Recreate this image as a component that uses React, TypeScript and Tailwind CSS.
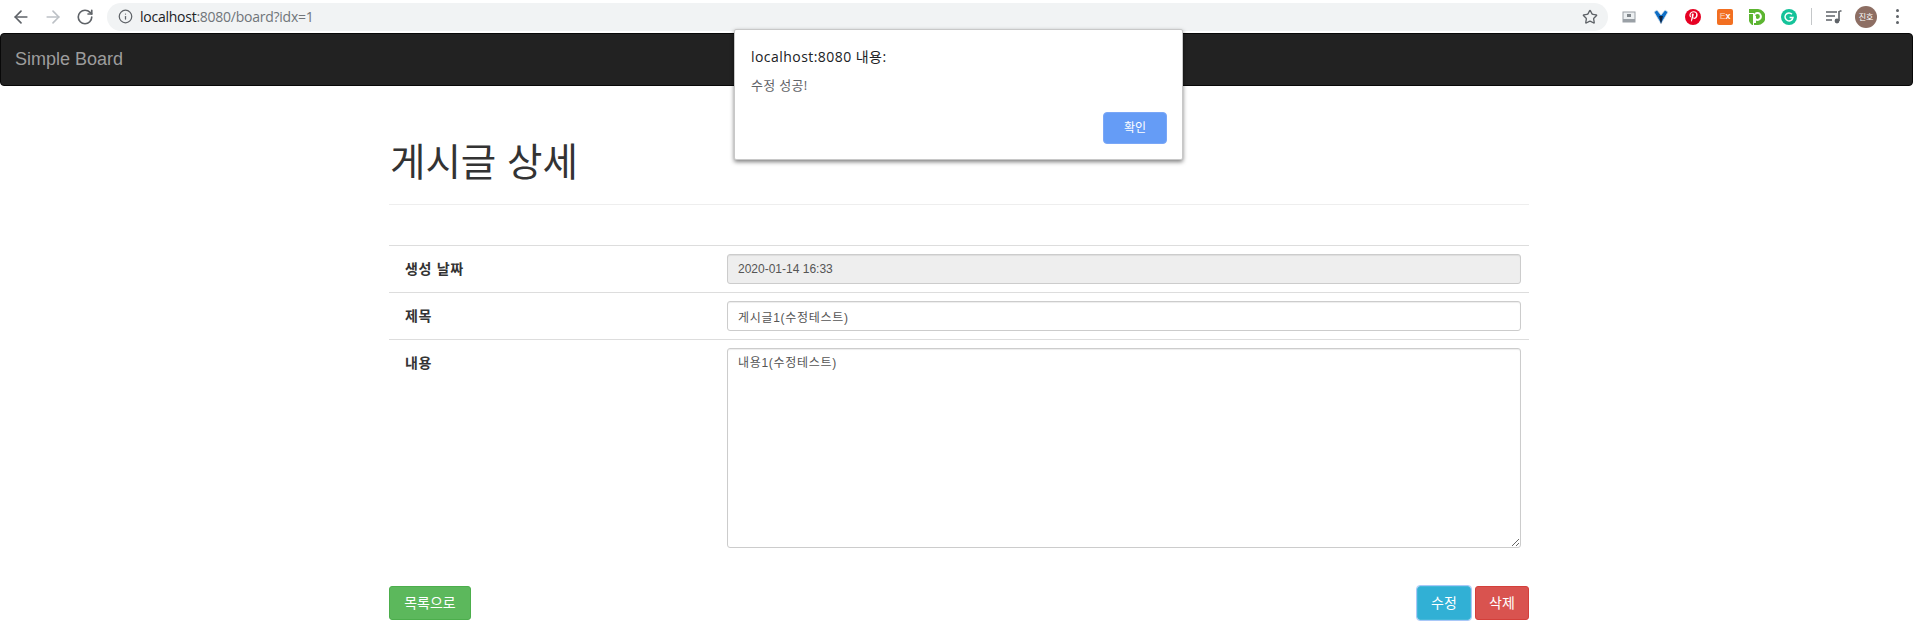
import { ArrowLeft, ArrowRight, RotateCw, Info, Star } from 'lucide-react';
import { FaPinterestP } from 'react-icons/fa';

const SANS = 'font-["Liberation_Sans","Noto_Sans_CJK_KR",sans-serif]';

function BrowserBar() {
  return (
    <div className="flex h-[33px] items-center bg-white pl-[11px] pr-[14px]">
      <ArrowLeft size={20} strokeWidth={2} className="text-[#5f6368]" />
      <ArrowRight size={20} strokeWidth={2} className="ml-[12px] text-[#bdc1c6]" />
      <RotateCw size={18} strokeWidth={2.2} className="ml-[13px] text-[#5f6368]" />
      <div className="ml-[13px] flex h-[28px] flex-1 items-center rounded-full bg-[#f1f3f4] pl-[11px] pr-[10px]">
        <Info size={15} strokeWidth={2} className="text-[#5f6368]" />
        <span className='ml-[7px] text-[14px] text-[#70757a] font-["Open_Sans","Noto_Sans",sans-serif] tracking-[-0.25px]'>
          <span className="text-[#202124]">localhost</span>:8080/board?idx=1
        </span>
        <Star size={16} strokeWidth={2} className="ml-auto text-[#5f6368]" />
      </div>
      <div className="ml-[14px] flex items-center">
        <svg width="14" height="12" viewBox="0 0 14 12">
          <rect x="1" y="1" width="12" height="10" fill="#eceff1" stroke="#9aa0a6" />
          <rect x="1" y="8" width="12" height="3" fill="#9aa0a6" />
          <rect x="5" y="3" width="4" height="3" fill="#80868b" />
        </svg>
        <svg width="16" height="16" viewBox="0 0 16 16" className="ml-[17px]">
          <path d="M1 3 L8 15 L15 3 L12 1 L8 6 L4 1 Z" fill="#0f6fc6" stroke="#dfe7ee" strokeWidth="0.8" />
          <path d="M6 7 L8 15 L10 7 Z" fill="#12233f" />
        </svg>
        <div className="ml-[16px] flex h-[16px] w-[16px] items-center justify-center rounded-full bg-[#e60023] text-[11px] text-white">
          <FaPinterestP />
        </div>
        <div className='ml-[16px] flex h-[16px] w-[16px] items-center justify-center rounded-[2px] bg-[#f26f21] text-[9px] font-bold text-white font-["Liberation_Sans",sans-serif]'>
          <span className="text-[#f9b48a]">E</span>x
        </div>
        <svg width="16" height="16" viewBox="0 0 16 16" className="ml-[16px]">
          <path d="M0 0 H9 A8 8 0 0 1 8 16 H5 V4 H0 Z" fill="#5cb531" />
          <path d="M0 5 H4 V16 H3 A8 8 0 0 1 0 12 Z" fill="#5cb531" />
          <circle cx="8.5" cy="7.5" r="3.4" fill="none" stroke="#fff" strokeWidth="2" />
          <path d="M6 7 V14" stroke="#fff" strokeWidth="2" />
        </svg>
        <svg width="16" height="16" viewBox="0 0 16 16" className="ml-[16px]">
          <circle cx="8" cy="8" r="8" fill="#15c39a" />
          <path d="M11 5.2 A4 4 0 1 0 12 8.4 H8.6" fill="none" stroke="#fff" strokeWidth="1.5" />
        </svg>
        <div className="ml-[14px] h-[17px] w-px bg-[#c4c7c9]" />
        <svg width="16" height="14" viewBox="0 0 16 14" className="ml-[14px]">
          <path d="M0 2 H11 M0 6 H9 M0 10 H6" stroke="#5f6368" strokeWidth="1.4" />
          <path d="M13.5 1 H15.5 M13 1 V11" stroke="#5f6368" strokeWidth="1.6" />
          <circle cx="11" cy="11" r="2.4" fill="#5f6368" />
        </svg>
        <div className='ml-[13px] flex h-[22px] w-[22px] items-center justify-center rounded-full bg-[#8d6e63] text-[8px] text-white font-["Noto_Sans_CJK_KR",sans-serif]'>
          진호
        </div>
        <div className="ml-[19px] flex flex-col gap-[3px]">
          <span className="h-[3px] w-[3px] rounded-full bg-[#5f6368]" />
          <span className="h-[3px] w-[3px] rounded-full bg-[#5f6368]" />
          <span className="h-[3px] w-[3px] rounded-full bg-[#5f6368]" />
        </div>
      </div>
    </div>
  );
}

function AlertDialog() {
  return (
    <div className='absolute left-[734px] top-[29px] h-[131px] w-[449px] rounded-[2px] border border-[#c8c8c8] bg-white pl-[16px] shadow-[0_2px_4px_rgba(0,0,0,0.5)] font-["Open_Sans","Noto_Sans_CJK_KR",sans-serif]'>
      <div className="mt-[17px] text-[14px] leading-[20px] tracking-[0.45px] text-[#202124]">localhost:8080 내용:</div>
      <div className="mt-[8px] text-[13px] leading-[20px] tracking-[0.3px] text-[#5f6368]">수정 성공!</div>
      <div className="absolute bottom-[15px] right-[15px] flex h-[32px] w-[64px] items-center justify-center rounded-[4px] border border-[#7aa7f7] bg-[#659cf6] text-[12px] text-white">
        확인
      </div>
    </div>
  );
}

function Row({ label, children, grow }: { label: string; children: React.ReactNode; grow?: boolean }) {
  return (
    <div className={`flex border-t border-[#ddd] ${grow ? 'h-[210px]' : 'h-[47px]'}`}>
      <div className="w-[330px] pl-[16px] pt-[13px] text-[14px] font-bold leading-[20px] tracking-[0.7px] text-[#333]">{label}</div>
      <div className="flex-1 pl-[8px] pr-[8px] pt-[8px]">{children}</div>
    </div>
  );
}

const fieldClass =
  'block h-[30px] w-full rounded-[3px] border border-[#ccc] px-[10px] text-[12px] text-[#555] shadow-[inset_0_1px_1px_rgba(0,0,0,0.075)] outline-none';

export default function App() {
  return (
    <div className={`relative h-[641px] overflow-hidden bg-white ${SANS}`}>
      <BrowserBar />
      <nav className="flex h-[53px] items-center rounded-[4px] border border-[#080808] bg-[#222] pl-[14px]">
        <span className="text-[18px] text-[#9d9d9d]">Simple Board</span>
      </nav>

      <main className="ml-[389px] w-[1140px]">
        <h1 className="mt-[54px] pl-[1px] text-[38.5px] font-normal leading-[46px] text-[#333]">게시글 상세</h1>
        <hr className="mt-[18px] border-[#eee]" />
        <div className="mt-[40px]">
          <Row label="생성 날짜">
            <input readOnly value="2020-01-14 16:33" className={`${fieldClass} bg-[#eee]`} />
          </Row>
          <Row label="제목">
            <input readOnly value="게시글1(수정테스트)" className={`${fieldClass} bg-white tracking-[0.7px]`} />
          </Row>
          <Row label="내용" grow>
            <textarea
              readOnly
              value="내용1(수정테스트)"
              className={`${fieldClass} h-[200px] resize-y bg-white py-[5px] tracking-[0.7px]`}
            />
          </Row>
        </div>
        <div className="mt-[37px] flex items-center text-[14px] text-white">
          <button className="h-[34px] w-[82px] rounded-[3px] border border-[#4cae4c] bg-[#5cb85c]">목록으로</button>
          <button className="ml-auto h-[34px] w-[54px] rounded-[3px] border border-[#46b8da] bg-[#31b0d5] outline outline-[#a9c8f8]">
            수정
          </button>
          <button className="ml-[4px] h-[34px] w-[54px] rounded-[3px] border border-[#d43f3a] bg-[#d9534f]">삭제</button>
        </div>
      </main>

      <AlertDialog />
    </div>
  );
}
